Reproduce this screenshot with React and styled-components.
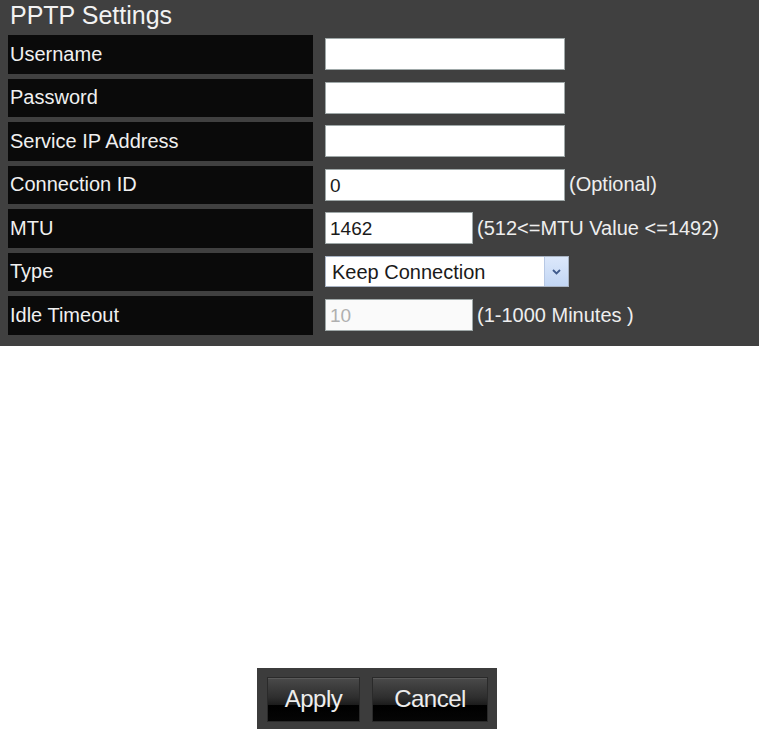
import React from "react";
import styled, {createGlobalStyle} from "styled-components";

const GlobalStyle = createGlobalStyle`
  html, body {
    margin: 0;
    padding: 0;
    background-color: #FFFFFF;
  }
  body {
    font-family: "Liberation Sans", Arial, sans-serif;
  }
`
const Page = styled.div`
  display: flex;
  flex-direction: column;
  align-items: center;
  width: 759px;
  height: 729px;
  overflow: hidden;
`
const Panel = styled.div`
  align-self: stretch;
  padding: 0 0 11px 8px;

  background-color: #404040;
`
const Title = styled.div`
  height: 35px;
  padding-left: 2px;

  font-size: 25px;
  line-height: 30px;
  color: #F2F2F2;
`
const Rows = styled.div`
  display: flex;
  flex-direction: column;
  gap: 5px;
`
const Row = styled.div`
  display: grid;
  grid-template-columns: 305px auto;
  column-gap: 12px;
  align-items: center;
  height: 38.5px;
`
const Label = styled.div`
  display: flex;
  align-items: center;
  height: 100%;
  padding-left: 2px;

  font-size: 20px;
  color: #F0F0F0;
  background-color: #0A0A0A;
`
const Field = styled.div`
  display: flex;
  align-items: center;
  gap: 4px;
`
const Input = styled.input`
  box-sizing: border-box;
  width: ${p => p.$w || 240}px;
  height: 32px;
  padding: 2px 4px 0 4px;

  font-family: "Liberation Sans", Arial, sans-serif;
  font-size: 19px;
  color: ${p => p.disabled ? "#B0B0B0" : "#1A1A1A"};
  background-color: ${p => p.disabled ? "#FAFAFA" : "#FFFFFF"};
  border: 1px solid #9FA8A8;
  border-radius: 0;
  &:focus {
    outline: none;
  }
`
const Hint = styled.span`
  font-size: 20px;
  color: #EEEEEE;
  white-space: nowrap;
`
const SelectWrap = styled.div`
  position: relative;
  width: 244px;
  height: 31px;
`
const Select = styled.select`
  box-sizing: border-box;
  width: 100%;
  height: 100%;
  padding: 0 0 0 6px;

  font-family: "Liberation Sans", Arial, sans-serif;
  font-size: 20px;
  color: #1A1A1A;
  background-color: #FFFFFF;
  border: 1px solid #A9B4C4;
  border-radius: 0;
  appearance: none;
  &:focus {
    outline: none;
  }
`
const Arrow = styled.div`
  position: absolute;
  top: 1px;
  right: 1px;
  bottom: 1px;
  width: 23px;
  display: flex;
  align-items: center;
  justify-content: center;
  pointer-events: none;

  background: linear-gradient(#DCE8FB, #C2D6F4);
  border-left: 1px solid #B7C8E4;
`
const ButtonBar = styled.div`
  display: flex;
  gap: 12px;
  margin: 322.5px 5px 0 0;
  padding: 9px 9px 7px 10px;

  background-color: #3C3C3C;
`
const Button = styled.button`
  width: ${p => p.$w}px;
  height: 45px;
  padding: 0 0 2px 0;

  font-family: "Liberation Sans", Arial, sans-serif;
  font-size: 24px;
  letter-spacing: -0.5px;
  color: #EDEDED;
  background: linear-gradient(#4A4A4A 0%, #2E2E2E 45%, #1C1C1C 62%, #000000 64%, #050505 100%);
  border: 1px solid #2A2A2A;
  border-radius: 0;
  box-shadow: inset 0 1px 0 #5A5A5A;
  cursor: pointer;
`

const rows = [
    {label: "Username"},
    {label: "Password", type: "password"},
    {label: "Service IP Address"},
    {label: "Connection ID", value: "0", hint: "(Optional)"},
    {label: "MTU", value: "1462", width: 148, hint: "(512<=MTU Value <=1492)"},
    {label: "Type", select: true},
    {label: "Idle Timeout", value: "10", width: 148, hint: "(1-1000 Minutes )", disabled: true},
]

let App = () => {
    return (
        <Page>
            <GlobalStyle/>
            <Panel>
                <Title>PPTP Settings</Title>
                <Rows>
                    {rows.map(r => (
                        <Row key={r.label}>
                            <Label>{r.label}</Label>
                            <Field>
                                {r.select ? (
                                    <SelectWrap>
                                        <Select defaultValue="keep">
                                            <option value="keep">Keep Connection</option>
                                            <option value="auto">Auto Connect</option>
                                            <option value="manual">Manual Connect</option>
                                        </Select>
                                        <Arrow>
                                            <svg width="9" height="6" viewBox="0 0 9 6">
                                                <path d="M1 1 L4.5 4.5 L8 1" fill="none" stroke="#3F5A8C" strokeWidth="1.8"/>
                                            </svg>
                                        </Arrow>
                                    </SelectWrap>
                                ) : (
                                    <Input type={r.type || "text"} defaultValue={r.value || ""} $w={r.width} disabled={r.disabled}/>
                                )}
                                {r.hint && <Hint>{r.hint}</Hint>}
                            </Field>
                        </Row>
                    ))}
                </Rows>
            </Panel>
            <ButtonBar>
                <Button $w={93}>Apply</Button>
                <Button $w={116}>Cancel</Button>
            </ButtonBar>
        </Page>
    )
}
export default App;
